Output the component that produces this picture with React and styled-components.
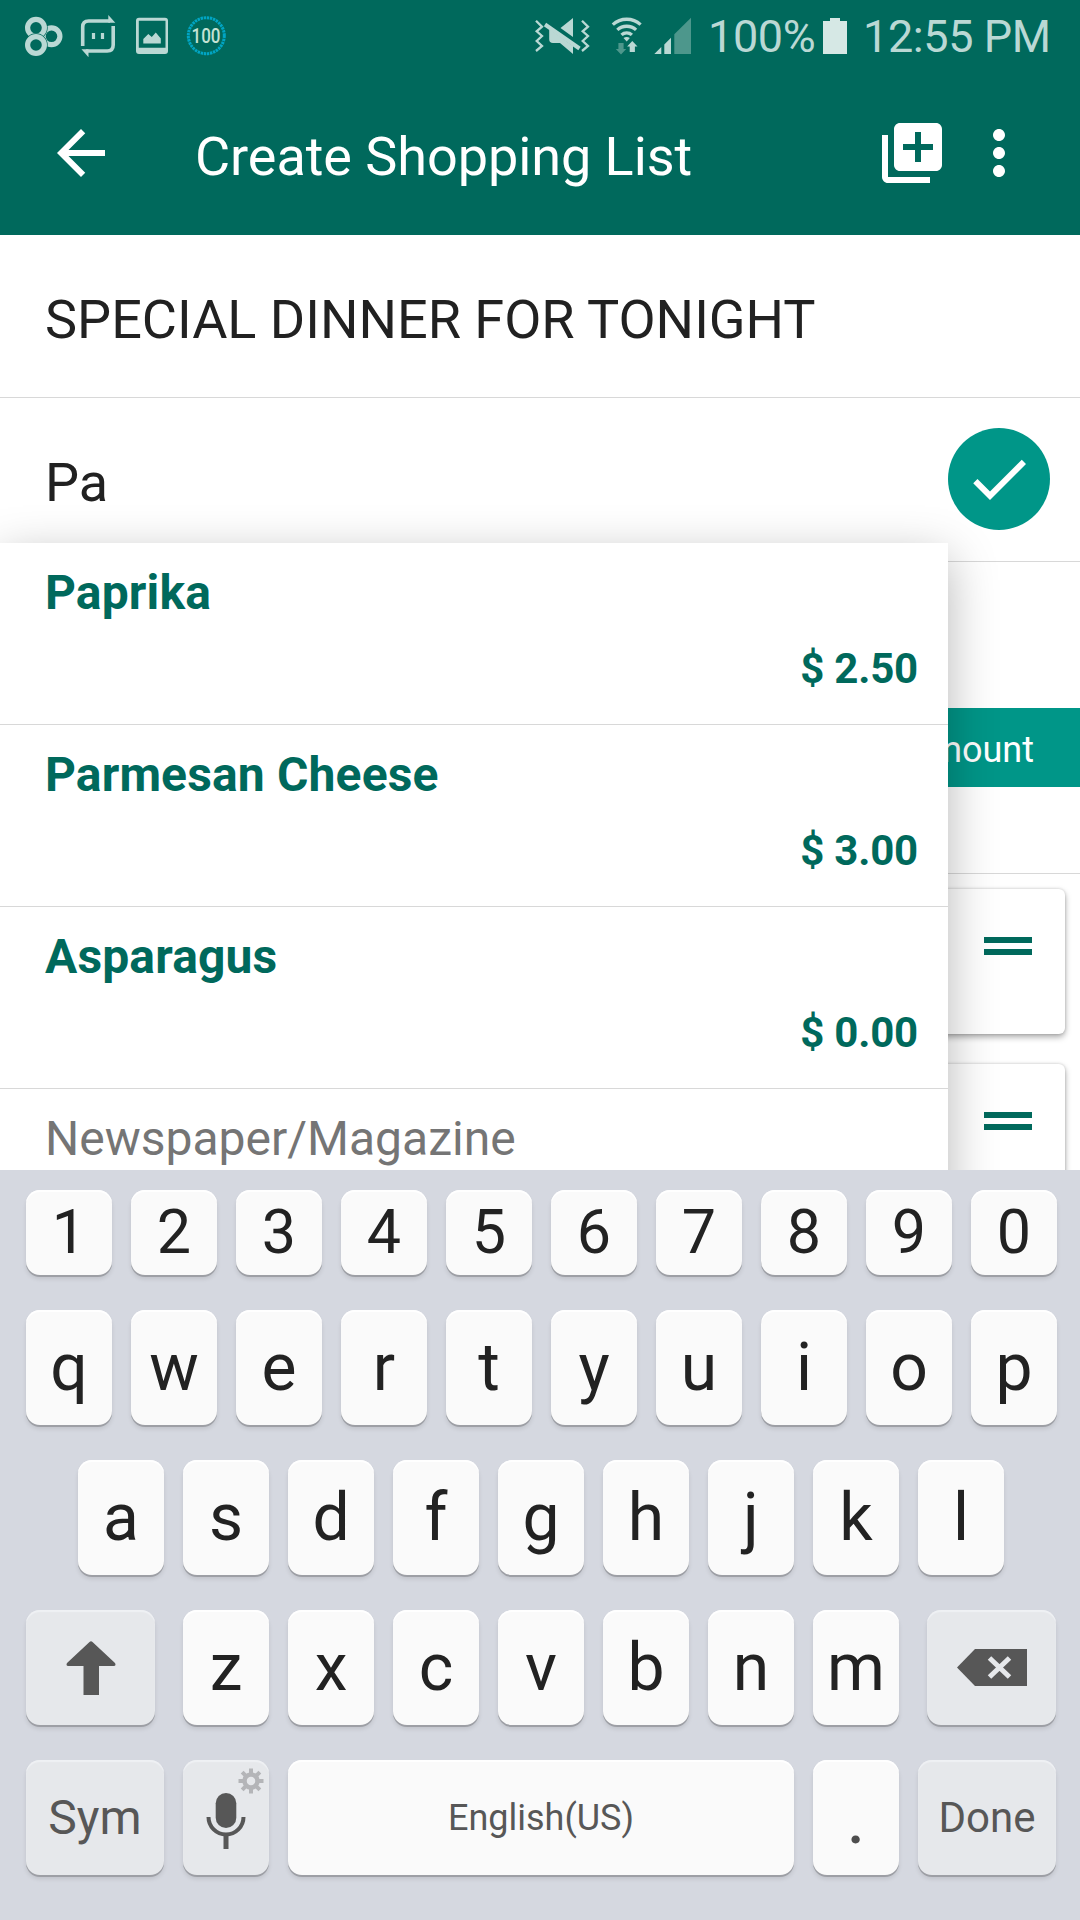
import React from "react";
import styled, { createGlobalStyle } from "styled-components";

const GlobalStyle = createGlobalStyle`
  * { box-sizing: border-box; }
  body { margin: 0; background: #fff; font-family: Roboto, "Noto Sans", sans-serif; }
`;

const Screen = styled.div`
  width: 1080px;
  height: 1920px;
  display: flex;
  flex-direction: column;
  overflow: hidden;
  background: #fff;
`;

const Header = styled.header`
  height: 235px;
  flex: none;
  background: #00695c;
  color: #fff;
`;

const StatusBar = styled.div`
  height: 72px;
  display: flex;
  justify-content: space-between;
  color: #bad8d4;
  font-size: 45px;
  line-height: 74px;
  white-space: nowrap;
`;

const StatusGroup = styled.div`
  display: flex;
`;

const Glyphs = styled.svg`
  display: block;
  flex: none;
`;

const StatusText = styled.span`
  display: block;
  width: ${(p) => p.$width}px;
  letter-spacing: -0.4px;
`;

const Toolbar = styled.div`
  height: 162px;
  display: flex;
  align-items: center;
  padding: 0 45px;
`;

const Icon = styled.svg`
  display: block;
  flex: none;
  width: 72px;
  height: 72px;
  fill: currentColor;
  margin-left: ${(p) => p.$gap || 0}px;
`;

const Title = styled.h1`
  flex: 1;
  margin: 8px 0 0 78px;
  font-size: 54px;
  line-height: 64px;
  font-weight: 400;
  letter-spacing: -0.06px;
`;

const Content = styled.main`
  position: relative;
  height: 935px;
  flex: none;
  overflow: hidden;
`;

const Field = styled.div`
  height: ${(p) => p.$height}px;
  display: flex;
  align-items: center;
  justify-content: space-between;
  padding: 6px 30px 0 45px;
  border-bottom: 1px solid #d8d8d8;
  font-size: 54px;
  color: #212121;
`;

const Confirm = styled.div`
  width: 102px;
  height: 102px;
  margin-top: -7px;
  border-radius: 50%;
  background: #009688;
  color: #fff;
  display: flex;
  align-items: center;
  justify-content: center;
`;

const TableHead = styled.div`
  height: 79px;
  margin-top: 146px;
  padding-right: 46px;
  background: #009688;
  color: #fff;
  font-size: 36px;
  line-height: 84px;
  text-align: right;
`;

const ItemList = styled.div`
  margin-top: 86px;
  padding: 15px 15px 0;
  border-top: 1px solid #d8d8d8;
  display: flex;
  flex-direction: column;
  gap: 30px;
`;

const Card = styled.div`
  height: 145px;
  flex: none;
  display: flex;
  justify-content: flex-end;
  padding: 48px 33px;
  border-radius: 6px;
  background: #fff;
  box-shadow: 0 3px 6px rgba(0, 0, 0, 0.34), 0 0 3px rgba(0, 0, 0, 0.16);
`;

const Handle = styled.div`
  width: 48px;
  height: 18px;
  border: solid #00695c;
  border-width: 6px 0;
`;

const Suggestions = styled.div`
  position: absolute;
  left: 0;
  top: 308px;
  width: 948px;
  height: 700px;
  background: #fff;
  box-shadow: 0 14px 46px rgba(0, 0, 0, 0.29);
`;

const Suggestion = styled.div`
  height: 182px;
  display: flex;
  flex-direction: column;
  justify-content: space-between;
  padding: 22px 30px 30px 45px;
  border-bottom: 1px solid #d8d8d8;
  color: ${(p) => (p.$plain ? "#757575" : "#00695c")};
  font-weight: ${(p) => (p.$plain ? 400 : 700)};
`;

const ItemName = styled.div`
  font-size: 48px;
  line-height: 56px;
  letter-spacing: ${(p) => (p.$plain ? 0 : 0.15)}px;
`;

const Price = styled.div`
  font-size: 42px;
  line-height: 50px;
  text-align: right;
  letter-spacing: -0.2px;
`;

const Keyboard = styled.section`
  flex: 1;
  display: flex;
  flex-direction: column;
  gap: 35px;
  padding-top: 20px;
  background: #d5d8e0;
`;

const KeyRow = styled.div`
  display: flex;
  justify-content: center;
  gap: 19px;
  padding-left: ${(p) => p.$inset || 2}px;
`;

const Key = styled.div`
  position: relative;
  flex: none;
  width: ${(p) => p.$width || 86}px;
  height: ${(p) => p.$height || 115}px;
  margin: 0 ${(p) => p.$after || 0}px 0 ${(p) => p.$before || 0}px;
  padding-top: ${(p) => p.$drop || 0}px;
  display: flex;
  align-items: center;
  justify-content: center;
  border-radius: 14px;
  background: ${(p) => (p.$soft ? "#e6e8eb" : "#fafafa")};
  color: ${(p) => p.$color || (p.$soft ? "#575757" : "#222")};
  font-size: ${(p) => p.$size || 66}px;
  line-height: 1;
  box-shadow: inset 0 2px 1px ${(p) => (p.$soft ? "#eff1f4" : "#fff")},
    0 2px 0 #9d9fa5, 0 4px 4px rgba(0, 0, 0, 0.1);
`;

const Gear = styled.svg`
  position: absolute;
  right: 5px;
  top: 8px;
`;

const suggestions = [
  { name: "Paprika", price: "$ 2.50" },
  { name: "Parmesan Cheese", price: "$ 3.00" },
  { name: "Asparagus", price: "$ 0.00" },
  { name: "Newspaper/Magazine", plain: true },
];

function Notifications() {
  return (
    <Glyphs width="240" height="72" viewBox="0 0 240 72" fill="none" stroke="#bad8d4">
      <circle cx="51.500" cy="36.300" r="8.400" strokeWidth="5.200" />
      <circle cx="36" cy="27.800" r="8.400" strokeWidth="6.600" stroke="#00695c" />
      <circle cx="36" cy="27.800" r="8.400" strokeWidth="5.200" />
      <circle cx="36" cy="45" r="8.400" strokeWidth="6.600" stroke="#00695c" />
      <circle cx="36" cy="45" r="8.400" strokeWidth="5.200" />
      <path d="M82.700 46V27q0-6 6-6H110M113.200 26v19q0 6-6 6H86" strokeWidth="3.600" />
      <path d="M108.300 15l7 7.700h-7zM88.500 57.300l-7-8h7z" fill="#bad8d4" stroke="none" />
      <path d="M93.500 33v6M102.500 33v6" strokeWidth="3.200" />
      <path fillRule="evenodd" stroke="none" fill="#bad8d4" d="M139 17.700h26q3 0 3 3v30.300q0 3-3 3h-26q-3 0-3-3V20.700q0-3 3-3zm-.2 3v27h26.700v-27zM143.300 43.500v-4.500l5-5 3.500 3 4-4.500 5 6v5z" />
      <circle cx="206.300" cy="35.700" r="18" stroke="#00a5c4" strokeWidth="3" strokeDasharray="2.400 .74" />
      <text x="206" y="43" textAnchor="middle" stroke="none" fill="#c4e2d4" fontSize="20.500" fontWeight="500" textLength="29" lengthAdjust="spacingAndGlyphs" letterSpacing="0">100</text>
    </Glyphs>
  );
}

function Signals() {
  return (
    <Glyphs width="174" height="72" viewBox="0 0 174 72" fill="#bad8d4">
      <g fill="none" stroke="#bad8d4" strokeWidth="2.300">
        <path d="M2 20.700l6 6-5.300 4.600L8 36l-5.300 5L8 46l-6 5M48 20.700l6 6-5.300 4.600L54 36l-5.300 5 5.300 5-6 5" />
      </g>
      <path d="M39 18v19L26.500 28zM15.200 29L39 46v8L26 43h-7q-3.800 0-3.800-3.800z" />
      <path d="M11 24.500l34.500 24" stroke="#bad8d4" strokeWidth="4" />
      <g fill="none" stroke="#bad8d4" strokeWidth="3.300">
        <path d="M78.800 24.600a20.700 20.700 0 0 1 27.800 0M83.300 29.900a14 14 0 0 1 18.800 0M87.500 34.900a7.700 7.700 0 0 1 10.400 0" />
      </g>
      <path d="M92.700 41.500l-3.200-3.500q3.200-2 6.400 0zM98.300 41l5.200 5.500h-2.600V52h-5.200v-5.500h-2.600z" />
      <path d="M87 54.500L81.800 49h2.600v-6h5.200v6h2.600z" fill="#4d978c" />
      <path d="M120.300 54l7-7v7zM130.300 44.500l6.700-6.800V54h-6.700z" />
      <path d="M140.300 34.300L157 17.700V54h-16.700z" fill="#4d978c" />
    </Glyphs>
  );
}

const keysOf = (s) => s.split("").map((k) => <Key key={k}>{k}</Key>);

export default function App() {
  return (
    <>
      <GlobalStyle />
      <Screen>
        <Header>
          <StatusBar>
            <Notifications />
            <StatusGroup>
              <Signals />
              <StatusText $width={115}>100%</StatusText>
              <Glyphs width="40" height="72" viewBox="0 0 40 72">
                <path d="M0 21h7v-3h10v3h7v33H0z" fill="#d6e8e5" />
              </Glyphs>
              <StatusText $width={217}>12:55 PM</StatusText>
            </StatusGroup>
          </StatusBar>
          <Toolbar>
            <Icon viewBox="0 0 24 24"><path d="M20 11H7.830l5.590-5.590L12 4l-8 8 8 8 1.410-1.410L7.830 13H20v-2z" /></Icon>
            <Title>Create Shopping List</Title>
            <Icon viewBox="0 0 24 24"><path d="M4 6H2v14c0 1.100.9 2 2 2h14v-2H4V6zm16-4H8c-1.100 0-2 .9-2 2v12c0 1.100.9 2 2 2h12c1.100 0 2-.9 2-2V4c0-1.100-.9-2-2-2zm-1 9h-4v4h-2v-4H9V9h4V5h2v4h4v2z" /></Icon>
            <Icon viewBox="0 0 24 24" $gap={15}><path d="M12 8c1.100 0 2-.9 2-2s-.9-2-2-2-2 .9-2 2 .9 2 2 2zm0 2c-1.100 0-2 .9-2 2s.9 2 2 2 2-.9 2-2-.9-2-2-2zm0 6c-1.100 0-2 .9-2 2s.9 2 2 2 2-.9 2-2-.9-2-2-2z" /></Icon>
          </Toolbar>
        </Header>
        <Content>
          <Field $height={163}>SPECIAL DINNER FOR TONIGHT</Field>
          <Field $height={164}>
            Pa
            <Confirm>
              <Icon viewBox="0 0 24 24"><path d="M9 16.170L4.830 12l-1.420 1.410L9 19 21 7l-1.410-1.410z" /></Icon>
            </Confirm>
          </Field>
          <TableHead>Amount</TableHead>
          <ItemList>
            <Card><Handle /></Card>
            <Card><Handle /></Card>
          </ItemList>
          <Suggestions>
            {suggestions.map((s) => (
              <Suggestion key={s.name} $plain={s.plain}>
                <ItemName $plain={s.plain}>{s.name}</ItemName>
                {s.price && <Price>{s.price}</Price>}
              </Suggestion>
            ))}
          </Suggestions>
        </Content>
        <Keyboard>
          <KeyRow $inset={3}>
            {"1234567890".split("").map((k) => (
              <Key key={k} $height={85} $size={61}>{k}</Key>
            ))}
          </KeyRow>
          <KeyRow $inset={3}>{keysOf("qwertyuiop")}</KeyRow>
          <KeyRow>{keysOf("asdfghjkl")}</KeyRow>
          <KeyRow>
            <Key $soft $width={129} $after={9}>
              <svg width="50" height="54" viewBox="0 0 50 54" fill="#575757"><path d="M23.500 1q1.500-1.500 3 0l22.500 21q1.500 3-1.500 3H33v29H17.500V25H2.500Q-.5 25 1 22z" /></svg>
            </Key>
            {keysOf("zxcvbnm")}
            <Key $soft $width={129} $before={9}>
              <svg width="70" height="37" viewBox="0 0 70 37"><path d="M0 18.500L18 0h52v37H18z" fill="#575757" /><path d="M32.500 9l20 19M52.500 9l-20 19" stroke="#e6e8eb" strokeWidth="5" /></svg>
            </Key>
          </KeyRow>
          <KeyRow>
            <Key $soft $width={138} $size={48}>Sym</Key>
            <Key $soft $drop={7}>
              <svg width="40" height="56" viewBox="0 0 40 56" fill="none" stroke="#575757">
                <rect x="9.700" y="0" width="20.600" height="35" rx="10.300" fill="#575757" stroke="none" />
                <path d="M2.500 24a17.500 17.500 0 0 0 35 0" strokeWidth="4" />
                <path d="M20 42v14" strokeWidth="5" />
              </svg>
              <Gear width="26" height="26" viewBox="-13 -13 26 26" fill="none" stroke="#b4b5b8">
                <circle r="6.500" strokeWidth="4.500" />
                {[0, 45, 90, 135].map((a) => (
                  <path key={a} d="M0-12.500V-8M0 8v4.500" strokeWidth="4" transform={`rotate(${a})`} />
                ))}
              </Gear>
            </Key>
            <Key $width={506} $size={36} $color="#575757">English(US)</Key>
            <Key $size={74} $color="#4d4d4d">.</Key>
            <Key $soft $width={138} $size={42}>Done</Key>
          </KeyRow>
        </Keyboard>
      </Screen>
    </>
  );
}
